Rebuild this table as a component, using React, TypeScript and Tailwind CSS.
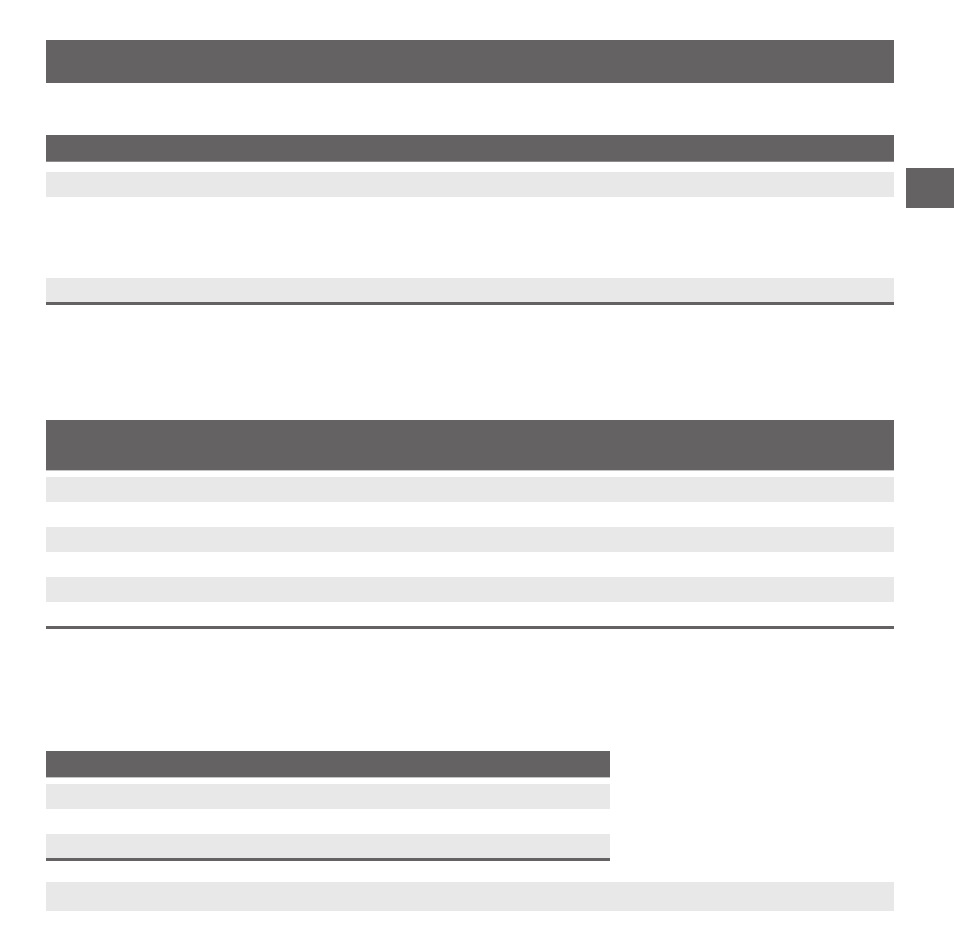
import React from 'react';

type RowKind = 'shade' | 'plain';

interface TableBlockProps {
  headerHeight: string;
  headerLine: string;
  gap: string;
  rows: { kind: RowKind; height: string }[];
  width?: string;
}

const TableBlock: React.FC<TableBlockProps> = ({ headerHeight, headerLine, gap, rows, width = 'w-full' }) => {
  return (
    <div className={`${width} flex flex-col`}>
      <div className={`${headerHeight} bg-[#646262] border-b ${headerLine}`} />
      <div className={gap} />
      {rows.map((row, i) => (
        <div key={i} className={`${row.height} ${row.kind === 'shade' ? 'bg-[#e8e8e8]' : 'bg-white'}`} />
      ))}
      <div className="h-[3px] bg-[#646262]" />
    </div>
  );
};

const App: React.FC = () => {
  return (
    <div className="w-[954px] h-[941px] bg-white flex pl-[46px] pt-[40px]" style={{ fontFamily: '"Liberation Sans", Arial, sans-serif' }}>
      <div className="w-[848px] flex flex-col">
        {/* title bar */}
        <div className="h-[43px] bg-[#646262]" />

        <div className="h-[52px]" />
        <TableBlock
          headerHeight="h-[27px]"
          headerLine="border-[#8e8c8c]"
          gap="h-[10px]"
          rows={[
            { kind: 'shade', height: 'h-[25px]' },
            { kind: 'plain', height: 'h-[81px]' },
            { kind: 'shade', height: 'h-[24px]' },
          ]}
        />

        <div className="h-[115px]" />
        <TableBlock
          headerHeight="h-[51px]"
          headerLine="border-[#c4c4c4]"
          gap="h-[6px]"
          rows={[
            { kind: 'shade', height: 'h-[25px]' },
            { kind: 'plain', height: 'h-[25px]' },
            { kind: 'shade', height: 'h-[25px]' },
            { kind: 'plain', height: 'h-[25px]' },
            { kind: 'shade', height: 'h-[25px]' },
            { kind: 'plain', height: 'h-[24px]' },
          ]}
        />

        <div className="h-[122px]" />
        <TableBlock
          width="w-[564px]"
          headerHeight="h-[27px]"
          headerLine="border-[#c4c4c4]"
          gap="h-[6px]"
          rows={[
            { kind: 'shade', height: 'h-[25px]' },
            { kind: 'plain', height: 'h-[25px]' },
            { kind: 'shade', height: 'h-[24px]' },
          ]}
        />

        <div className="h-[21px]" />
        <div className="h-[29px] bg-[#e8e8e8]" />
      </div>

      {/* thumb index tab */}
      <div className="ml-[12px] mt-[128px] w-[48px] h-[40px] bg-[#646262]" />
    </div>
  );
};

export default App;
